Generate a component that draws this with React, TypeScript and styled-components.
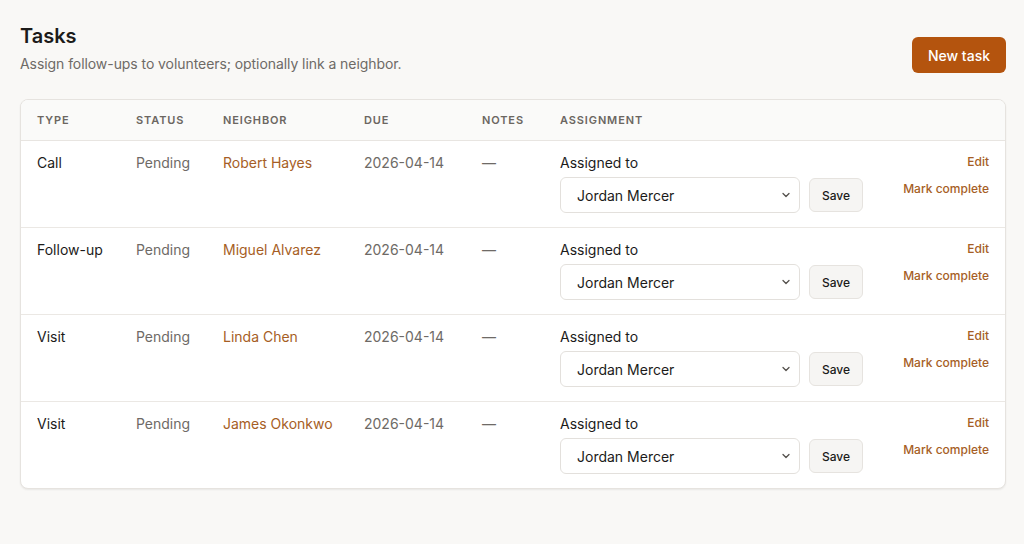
import React from 'react';
import styled, { createGlobalStyle } from 'styled-components';

interface Task {
  id: number;
  type: string;
  status: string;
  neighbor: string;
  due: string;
  notes: string;
  assignee: string;
}

const TASKS: Task[] = [
  { id: 1, type: 'Call', status: 'Pending', neighbor: 'Robert Hayes', due: '2026-04-14', notes: '—', assignee: 'Jordan Mercer' },
  { id: 2, type: 'Follow-up', status: 'Pending', neighbor: 'Miguel Alvarez', due: '2026-04-14', notes: '—', assignee: 'Jordan Mercer' },
  { id: 3, type: 'Visit', status: 'Pending', neighbor: 'Linda Chen', due: '2026-04-14', notes: '—', assignee: 'Jordan Mercer' },
  { id: 4, type: 'Visit', status: 'Pending', neighbor: 'James Okonkwo', due: '2026-04-14', notes: '—', assignee: 'Jordan Mercer' },
];

const COLUMN_WIDTHS = [99, 87, 141, 118, 78, 335, 126];

const LINK = '#a65e25';

const GlobalStyle = createGlobalStyle`
  html, body {
    margin: 0;
    background: #f9f8f6;
    font-family: Inter, "Noto Sans", sans-serif;
    color: #1c1b1a;
  }
`;

const Page = styled.main`
  padding: 22px 18px 20px 20px;
`;

const PageHeader = styled.header`
  display: flex;
  justify-content: space-between;
  align-items: flex-end;
  margin-bottom: 25px;
`;

const Title = styled.h1`
  margin: 0 0 4px;
  font-size: 20px;
  line-height: 28px;
  font-weight: 600;
  color: #1c1b1a;
`;

const Subtitle = styled.p`
  margin: 0;
  font-size: 14px;
  line-height: 20px;
  letter-spacing: -0.005em;
  color: #6e6a66;
`;

const PrimaryButton = styled.button`
  height: 36px;
  margin-bottom: 1px;
  padding: 0 16px;
  border: none;
  border-radius: 6px;
  background: #b4540e;
  color: #fff;
  font-family: inherit;
  font-size: 14px;
  font-weight: 500;
  cursor: pointer;
`;

const Card = styled.div`
  background: #fff;
  border: 1px solid #e6e3df;
  border-radius: 8px;
  box-shadow: 0 1px 2px rgba(0, 0, 0, 0.07);
  overflow: hidden;
`;

const Table = styled.table`
  width: 100%;
  border-collapse: collapse;
  table-layout: fixed;
`;

const HeadCell = styled.th`
  padding: 12px 16px;
  background: #fafaf9;
  border-bottom: 1px solid #e8e5e1;
  text-align: left;
  font-size: 11px;
  line-height: 16px;
  font-weight: 600;
  letter-spacing: 0.08em;
  text-transform: uppercase;
  color: #6b6661;
`;

const Row = styled.tr`
  & + & td {
    border-top: 1px solid #ebe8e4;
  }
`;

const Cell = styled.td<{ $tone?: 'default' | 'muted' | 'link' }>`
  padding: 12px 16px 14px;
  vertical-align: top;
  white-space: nowrap;
  font-size: 14px;
  line-height: 20px;
  color: ${({ $tone }) =>
    $tone === 'muted' ? '#6e6a66' : $tone === 'link' ? LINK : '#1c1b1a'};
`;

const FieldLabel = styled.label`
  display: block;
  margin-bottom: 4px;
  font-size: 14px;
  line-height: 20px;
  color: #1c1b1a;
`;

const AssignRow = styled.div`
  display: flex;
  align-items: center;
  gap: 9px;
`;

const SelectWrap = styled.div`
  position: relative;
  width: 240px;
`;

const Select = styled.select`
  width: 100%;
  height: 36px;
  padding: 0 28px 0 16px;
  border: 1px solid #e3e0dc;
  border-radius: 6px;
  background: #fff;
  appearance: none;
  font-family: inherit;
  font-size: 14px;
  color: #1c1b1a;
`;

const Chevron = styled.svg`
  position: absolute;
  right: 8px;
  top: 50%;
  transform: translateY(-50%);
  pointer-events: none;
`;

const SaveButton = styled.button`
  width: 54px;
  height: 34px;
  border: 1px solid #e6e3df;
  border-radius: 6px;
  background: #f6f5f3;
  font-family: inherit;
  font-size: 12px;
  font-weight: 500;
  color: #1c1b1a;
  cursor: pointer;
`;

const Actions = styled.div`
  display: flex;
  flex-direction: column;
  align-items: flex-end;
  gap: 11px;
  padding-top: 1px;
`;

const LinkButton = styled.button`
  padding: 0;
  border: none;
  background: none;
  font-family: inherit;
  font-size: 12px;
  line-height: 16px;
  font-weight: 500;
  color: ${LINK};
  cursor: pointer;
`;

const TaskRow: React.FC<{ task: Task }> = ({ task }) => (
  <Row>
    <Cell>{task.type}</Cell>
    <Cell $tone="muted">{task.status}</Cell>
    <Cell $tone="link">{task.neighbor}</Cell>
    <Cell $tone="muted">{task.due}</Cell>
    <Cell $tone="muted">{task.notes}</Cell>
    <Cell>
      <FieldLabel htmlFor={`assignee-${task.id}`}>Assigned to</FieldLabel>
      <AssignRow>
        <SelectWrap>
          <Select id={`assignee-${task.id}`} defaultValue={task.assignee}>
            <option>Jordan Mercer</option>
            <option>Unassigned</option>
          </Select>
          <Chevron width="12" height="12" viewBox="0 0 12 12" fill="none">
            <path d="M3 4.5 6 7.5 9 4.5" stroke="#55514d" strokeWidth="1.3" strokeLinecap="round" strokeLinejoin="round" />
          </Chevron>
        </SelectWrap>
        <SaveButton type="button">Save</SaveButton>
      </AssignRow>
    </Cell>
    <Cell>
      <Actions>
        <LinkButton type="button">Edit</LinkButton>
        <LinkButton type="button">Mark complete</LinkButton>
      </Actions>
    </Cell>
  </Row>
);

const App: React.FC = () => (
  <>
    <GlobalStyle />
    <Page>
      <PageHeader>
        <div>
          <Title>Tasks</Title>
          <Subtitle>Assign follow-ups to volunteers; optionally link a neighbor.</Subtitle>
        </div>
        <PrimaryButton type="button">New task</PrimaryButton>
      </PageHeader>
      <Card>
        <Table>
          <colgroup>
            {COLUMN_WIDTHS.map((w, i) => (
              <col key={i} style={{ width: w }} />
            ))}
          </colgroup>
          <thead>
            <tr>
              <HeadCell>Type</HeadCell>
              <HeadCell>Status</HeadCell>
              <HeadCell>Neighbor</HeadCell>
              <HeadCell>Due</HeadCell>
              <HeadCell>Notes</HeadCell>
              <HeadCell>Assignment</HeadCell>
              <HeadCell />
            </tr>
          </thead>
          <tbody>
            {TASKS.map((task) => (
              <TaskRow key={task.id} task={task} />
            ))}
          </tbody>
        </Table>
      </Card>
    </Page>
  </>
);

export default App;
